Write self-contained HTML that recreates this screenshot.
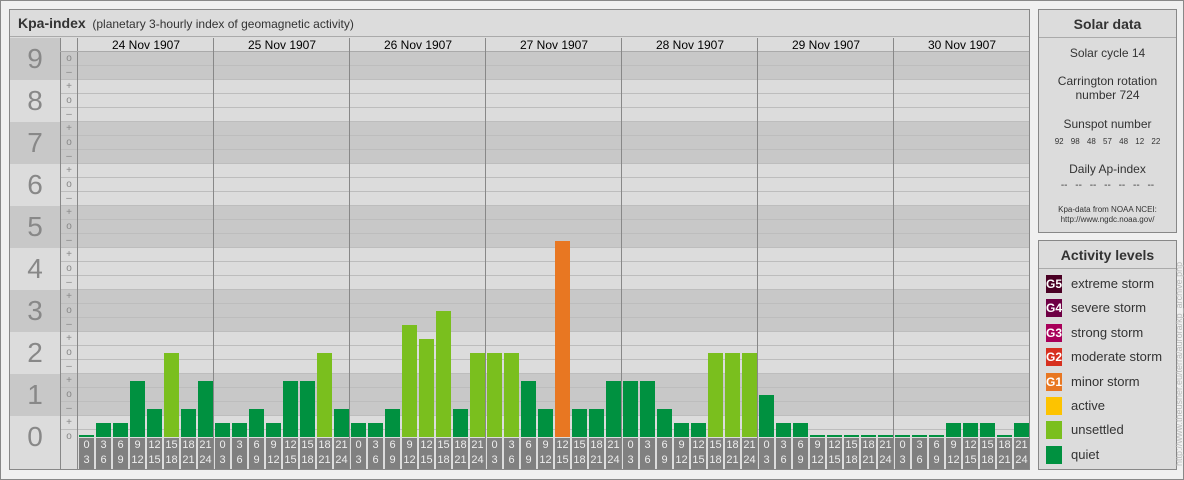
<!DOCTYPE html>
<html><head><meta charset="utf-8"><style>
*{margin:0;padding:0;box-sizing:border-box}
body{width:1184px;height:480px;background:#f0f0f0;position:relative;overflow:hidden;font-family:"Liberation Sans",sans-serif}
div{position:absolute}
.d{background:#c8c8c8}.l{background:#dcdcdc}
.n{left:10px;width:50px;text-align:center;font-size:28px;color:#888;line-height:30px}
.s{left:60px;width:18px;text-align:center;font-size:10px;color:#888;line-height:14px}
.b{width:15px;background:#009140}
.u{background:#7abf1e}.o{background:#e87722}
.t{top:438px;height:31px;width:15px;background:#808080;color:#eee;font-size:11px;line-height:15px;text-align:center}
.v{top:38px;height:431px;width:1px;background:#888}
.dt{top:38px;height:14px;width:136px;text-align:center;font-size:12px;line-height:14px;color:#000}
.sw{left:1046px;width:16px;height:18px;color:#fff;font-size:12px;font-weight:bold;line-height:18px;text-align:center}
.lt{left:1071px;font-size:13px;color:#333;line-height:18px}
.c{left:1039px;width:137px;text-align:center;color:#333}
</style></head><body>
<div style="left:0;top:0;width:1184px;height:480px;border:1px solid #888"></div>
<!-- main panel -->
<div style="left:9px;top:9px;width:1021px;height:461px;border:1px solid #888;background:#dcdcdc"></div>
<div style="left:10px;top:10px;width:1019px;height:27px;background:#dcdcdc;border-bottom:1px solid #aaa;font-size:12px;line-height:27px;color:#333;padding-left:8px"><b style="font-size:14px;color:#333">Kpa-index</b>&nbsp;&nbsp;(planetary 3-hourly index of geomagnetic activity)</div>
<!-- bands -->
<div class="d" style="left:10px;top:38px;width:50px;height:42px"></div>
<div class="l" style="left:60px;top:38px;width:969px;height:14px"></div>
<div class="d" style="left:60px;top:52px;width:969px;height:28px"></div>
<div class="l" style="left:10px;top:80px;width:1019px;height:42px"></div>
<div class="d" style="left:10px;top:122px;width:1019px;height:42px"></div>
<div class="l" style="left:10px;top:164px;width:1019px;height:42px"></div>
<div class="d" style="left:10px;top:206px;width:1019px;height:42px"></div>
<div class="l" style="left:10px;top:248px;width:1019px;height:42px"></div>
<div class="d" style="left:10px;top:290px;width:1019px;height:42px"></div>
<div class="l" style="left:10px;top:332px;width:1019px;height:42px"></div>
<div class="d" style="left:10px;top:374px;width:1019px;height:42px"></div>
<div class="l" style="left:10px;top:416px;width:1019px;height:53px"></div>
<div style="left:60px;top:52px;width:969px;height:385px;background:repeating-linear-gradient(to bottom,transparent 0,transparent 13px,#bdbdbd 13px,#bdbdbd 14px)"></div>
<div style="left:60px;top:38px;width:1px;height:431px;background:#888"></div>
<div style="left:77px;top:38px;width:1px;height:431px;background:#888"></div>
<div style="left:60px;top:51px;width:969px;height:1px;background:#aaa"></div>
<!-- numbers -->
<div class="n" style="top:44px">9</div><div class="n" style="top:86px">8</div><div class="n" style="top:128px">7</div><div class="n" style="top:170px">6</div><div class="n" style="top:212px">5</div><div class="n" style="top:254px">4</div><div class="n" style="top:296px">3</div><div class="n" style="top:338px">2</div><div class="n" style="top:380px">1</div><div class="n" style="top:422px">0</div>
<!-- signs -->
<div class="s" style="top:52px;height:392px;overflow:hidden">o<br>–<br>+<br>o<br>–<br>+<br>o<br>–<br>+<br>o<br>–<br>+<br>o<br>–<br>+<br>o<br>–<br>+<br>o<br>–<br>+<br>o<br>–<br>+<br>o<br>–<br>+<br>o</div>
<!-- dates -->
<div class="dt" style="left:78px">24 Nov 1907</div><div class="dt" style="left:214px">25 Nov 1907</div><div class="dt" style="left:350px">26 Nov 1907</div><div class="dt" style="left:486px">27 Nov 1907</div><div class="dt" style="left:622px">28 Nov 1907</div><div class="dt" style="left:758px">29 Nov 1907</div><div class="dt" style="left:894px">30 Nov 1907</div>
<div class="v" style="left:213px"></div><div class="v" style="left:349px"></div><div class="v" style="left:485px"></div><div class="v" style="left:621px"></div><div class="v" style="left:757px"></div><div class="v" style="left:893px"></div>
<!-- bars day1 -->
<div class="b" style="left:79px;top:435px;height:2px"></div>
<div class="b" style="left:96px;top:423px;height:14px"></div>
<div class="b" style="left:113px;top:423px;height:14px"></div>
<div class="b" style="left:130px;top:381px;height:56px"></div>
<div class="b" style="left:147px;top:409px;height:28px"></div>
<div class="b u" style="left:164px;top:353px;height:84px"></div>
<div class="b" style="left:181px;top:409px;height:28px"></div>
<div class="b" style="left:198px;top:381px;height:56px"></div>
<!-- day2 -->
<div class="b" style="left:215px;top:423px;height:14px"></div>
<div class="b" style="left:232px;top:423px;height:14px"></div>
<div class="b" style="left:249px;top:409px;height:28px"></div>
<div class="b" style="left:266px;top:423px;height:14px"></div>
<div class="b" style="left:283px;top:381px;height:56px"></div>
<div class="b" style="left:300px;top:381px;height:56px"></div>
<div class="b u" style="left:317px;top:353px;height:84px"></div>
<div class="b" style="left:334px;top:409px;height:28px"></div>
<!-- day3 -->
<div class="b" style="left:351px;top:423px;height:14px"></div>
<div class="b" style="left:368px;top:423px;height:14px"></div>
<div class="b" style="left:385px;top:409px;height:28px"></div>
<div class="b u" style="left:402px;top:325px;height:112px"></div>
<div class="b u" style="left:419px;top:339px;height:98px"></div>
<div class="b u" style="left:436px;top:311px;height:126px"></div>
<div class="b" style="left:453px;top:409px;height:28px"></div>
<div class="b u" style="left:470px;top:353px;height:84px"></div>
<!-- day4 -->
<div class="b u" style="left:487px;top:353px;height:84px"></div>
<div class="b u" style="left:504px;top:353px;height:84px"></div>
<div class="b" style="left:521px;top:381px;height:56px"></div>
<div class="b" style="left:538px;top:409px;height:28px"></div>
<div class="b o" style="left:555px;top:241px;height:196px"></div>
<div class="b" style="left:572px;top:409px;height:28px"></div>
<div class="b" style="left:589px;top:409px;height:28px"></div>
<div class="b" style="left:606px;top:381px;height:56px"></div>
<!-- day5 -->
<div class="b" style="left:623px;top:381px;height:56px"></div>
<div class="b" style="left:640px;top:381px;height:56px"></div>
<div class="b" style="left:657px;top:409px;height:28px"></div>
<div class="b" style="left:674px;top:423px;height:14px"></div>
<div class="b" style="left:691px;top:423px;height:14px"></div>
<div class="b u" style="left:708px;top:353px;height:84px"></div>
<div class="b u" style="left:725px;top:353px;height:84px"></div>
<div class="b u" style="left:742px;top:353px;height:84px"></div>
<!-- day6 -->
<div class="b" style="left:759px;top:395px;height:42px"></div>
<div class="b" style="left:776px;top:423px;height:14px"></div>
<div class="b" style="left:793px;top:423px;height:14px"></div>
<div class="b" style="left:810px;top:435px;height:2px"></div>
<div class="b" style="left:827px;top:435px;height:2px"></div>
<div class="b" style="left:844px;top:435px;height:2px"></div>
<div class="b" style="left:861px;top:435px;height:2px"></div>
<div class="b" style="left:878px;top:435px;height:2px"></div>
<!-- day7 -->
<div class="b" style="left:895px;top:435px;height:2px"></div>
<div class="b" style="left:912px;top:435px;height:2px"></div>
<div class="b" style="left:929px;top:435px;height:2px"></div>
<div class="b" style="left:946px;top:423px;height:14px"></div>
<div class="b" style="left:963px;top:423px;height:14px"></div>
<div class="b" style="left:980px;top:423px;height:14px"></div>
<div class="b" style="left:997px;top:435px;height:2px"></div>
<div class="b" style="left:1014px;top:423px;height:14px"></div>
<!-- labels -->
<div class="t" style="left:79px">0<br>3</div><div class="t" style="left:96px">3<br>6</div><div class="t" style="left:113px">6<br>9</div><div class="t" style="left:130px">9<br>12</div><div class="t" style="left:147px">12<br>15</div><div class="t" style="left:164px">15<br>18</div><div class="t" style="left:181px">18<br>21</div><div class="t" style="left:198px">21<br>24</div>
<div class="t" style="left:215px">0<br>3</div><div class="t" style="left:232px">3<br>6</div><div class="t" style="left:249px">6<br>9</div><div class="t" style="left:266px">9<br>12</div><div class="t" style="left:283px">12<br>15</div><div class="t" style="left:300px">15<br>18</div><div class="t" style="left:317px">18<br>21</div><div class="t" style="left:334px">21<br>24</div>
<div class="t" style="left:351px">0<br>3</div><div class="t" style="left:368px">3<br>6</div><div class="t" style="left:385px">6<br>9</div><div class="t" style="left:402px">9<br>12</div><div class="t" style="left:419px">12<br>15</div><div class="t" style="left:436px">15<br>18</div><div class="t" style="left:453px">18<br>21</div><div class="t" style="left:470px">21<br>24</div>
<div class="t" style="left:487px">0<br>3</div><div class="t" style="left:504px">3<br>6</div><div class="t" style="left:521px">6<br>9</div><div class="t" style="left:538px">9<br>12</div><div class="t" style="left:555px">12<br>15</div><div class="t" style="left:572px">15<br>18</div><div class="t" style="left:589px">18<br>21</div><div class="t" style="left:606px">21<br>24</div>
<div class="t" style="left:623px">0<br>3</div><div class="t" style="left:640px">3<br>6</div><div class="t" style="left:657px">6<br>9</div><div class="t" style="left:674px">9<br>12</div><div class="t" style="left:691px">12<br>15</div><div class="t" style="left:708px">15<br>18</div><div class="t" style="left:725px">18<br>21</div><div class="t" style="left:742px">21<br>24</div>
<div class="t" style="left:759px">0<br>3</div><div class="t" style="left:776px">3<br>6</div><div class="t" style="left:793px">6<br>9</div><div class="t" style="left:810px">9<br>12</div><div class="t" style="left:827px">12<br>15</div><div class="t" style="left:844px">15<br>18</div><div class="t" style="left:861px">18<br>21</div><div class="t" style="left:878px">21<br>24</div>
<div class="t" style="left:895px">0<br>3</div><div class="t" style="left:912px">3<br>6</div><div class="t" style="left:929px">6<br>9</div><div class="t" style="left:946px">9<br>12</div><div class="t" style="left:963px">12<br>15</div><div class="t" style="left:980px">15<br>18</div><div class="t" style="left:997px">18<br>21</div><div class="t" style="left:1014px">21<br>24</div>
<!-- solar data -->
<div style="left:1038px;top:9px;width:139px;height:224px;border:1px solid #888;background:#dcdcdc"></div>
<div class="c" style="top:10px;height:28px;line-height:28px;border-bottom:1px solid #aaa;font-weight:bold;font-size:14px">Solar data</div>
<div class="c" style="top:46px;font-size:12px">Solar cycle 14</div>
<div class="c" style="top:74px;font-size:12px;line-height:14px">Carrington rotation<br>number 724</div>
<div class="c" style="top:117px;font-size:12px">Sunspot number</div>
<div class="c" style="top:137px;font-size:8px;word-spacing:5px">92 98 48 57 48 12 22</div>
<div class="c" style="top:162px;font-size:12px">Daily Ap-index</div>
<div class="c" style="top:180px;font-size:10px;word-spacing:5px">-- -- -- -- -- -- --</div>
<div class="c" style="top:205px;font-size:8px;line-height:10px">Kpa-data from NOAA NCEI:<br>http://www.ngdc.noaa.gov/</div>
<!-- activity -->
<div style="left:1038px;top:240px;width:139px;height:230px;border:1px solid #888;background:#dcdcdc"></div>
<div class="c" style="top:241px;height:28px;line-height:28px;border-bottom:1px solid #aaa;font-weight:bold;font-size:14px">Activity levels</div>
<div class="sw" style="top:275px;background:#4a0024">G5</div><div class="lt" style="top:275px">extreme storm</div>
<div class="sw" style="top:299px;background:#6e0044">G4</div><div class="lt" style="top:299px">severe storm</div>
<div class="sw" style="top:324px;background:#a8005a">G3</div><div class="lt" style="top:324px">strong storm</div>
<div class="sw" style="top:348px;background:#d7301f">G2</div><div class="lt" style="top:348px">moderate storm</div>
<div class="sw" style="top:373px;background:#e87722">G1</div><div class="lt" style="top:373px">minor storm</div>
<div class="sw" style="top:397px;background:#fdc300"></div><div class="lt" style="top:397px">active</div>
<div class="sw" style="top:421px;background:#7abf1e"></div><div class="lt" style="top:421px">unsettled</div>
<div class="sw" style="top:446px;background:#009140"></div><div class="lt" style="top:446px">quiet</div>
<div style="left:1173px;top:466px;width:240px;transform:rotate(-90deg);transform-origin:0 0;font-size:9px;color:#bbb;line-height:12px;white-space:nowrap">http://www.theusner.eu/terra/aurora/kp_archive.php</div>
</body></html>
